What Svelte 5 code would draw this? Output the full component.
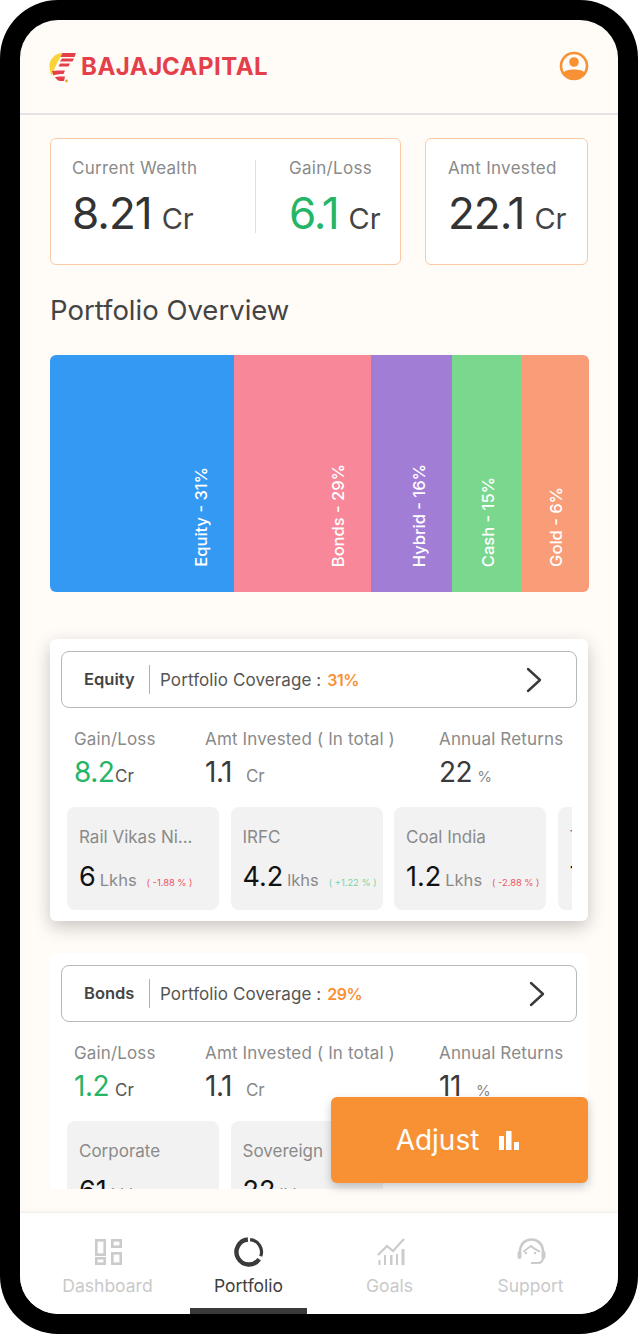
<script lang="ts">
  const summary = [
    { label: 'Current Wealth', value: '8.21', tone: '' },
    { label: 'Gain/Loss', value: '6.1', tone: 'green' }
  ];

  const slices = [
    { label: 'Equity - 31%', width: 184, color: '#3399f3' },
    { label: 'Bonds - 29%', width: 137, color: '#f78799' },
    { label: 'Hybrid - 16%', width: 81, color: '#a17dd6' },
    { label: 'Cash - 15%', width: 69, color: '#79d88e' },
    { label: 'Gold - 6%', width: 68, color: '#f99d79' }
  ];

  const groups = [
    {
      name: 'Equity',
      coverage: '31%',
      gain: '8.2',
      invested: '1.1',
      returns: '22',
      raised: true,
      tiles: [
        { name: 'Rail Vikas Ni...', value: '6', unit: 'Lkhs', change: '( -1.88 % )', up: false },
        { name: 'IRFC', value: '4.2', unit: 'lkhs', change: '( +1.22 % )', up: true },
        { name: 'Coal India', value: '1.2', unit: 'Lkhs', change: '( -2.88 % )', up: false },
        { name: 'Tata Steel', value: '7.1', unit: 'Lkhs', change: '', up: false }
      ]
    },
    {
      name: 'Bonds',
      coverage: '29%',
      gain: '1.2',
      invested: '1.1',
      returns: '11',
      raised: false,
      tiles: [
        { name: 'Corporate', value: '61', unit: 'Lkhs', change: '', up: false },
        { name: 'Sovereign', value: '22', unit: 'lkhs', change: '', up: false }
      ]
    }
  ];
</script>

<div class="frame">
  <div class="screen">
    <header class="topbar">
      <div class="brand">
        <svg width="30" height="32" viewBox="0 0 30 32" aria-hidden="true">
          <path d="M15 2C7 2 1.500 8 1.500 15C1.500 19 2.500 23 4 25C6.500 17 10 9 15 2Z" fill="#f9d23c" />
          <path d="M14.500 2H28L26.500 6H12.500Z" fill="#e5404a" />
          <path d="M14 7.500H26L24.500 10.500H12Z" fill="#e5404a" />
          <path d="M12 12.500H22L20.500 15.500H10.500Z" fill="#e5404a" />
          <path d="M4 20C8 19.500 12 19.500 17 19.500L15.500 23C11 23 8 23.500 5.500 24.500Z" fill="#e5404a" />
          <path d="M7 26C10 25.500 13 25.500 17 25.500L16 30H12.500C10 30 8 28 7 26Z" fill="#e5404a" />
          <circle cx="18.500" cy="30" r="1.400" fill="#f5a623" />
        </svg>
        <span class="wordmark">BAJAJ CAPITAL</span>
      </div>
      <svg class="avatar" width="30" height="30" viewBox="0 0 30 30" aria-hidden="true">
        <defs>
          <clipPath id="avatar-clip"><circle cx="15" cy="15" r="14" /></clipPath>
        </defs>
        <circle cx="15" cy="15" r="13" fill="none" stroke="#f79134" stroke-width="2.600" />
        <circle cx="15" cy="11" r="4.800" fill="#f79134" />
        <path d="M3 29V25C3 20.500 8 18.500 15 18.500C22 18.500 27 20.500 27 25V29Z" fill="#f79134" clip-path="url(#avatar-clip)" />
      </svg>
    </header>

    <main class="content">
      <section class="summary">
        <div class="stat-box wide">
          {#each summary as item, i}
            <div class="stat" class:split={i > 0}>
              <div class="stat-label">{item.label}</div>
              <div class="stat-value">
                <span class="figure {item.tone}">{item.value}</span>
                <span class="unit">Cr</span>
              </div>
            </div>
          {/each}
        </div>
        <div class="stat-box narrow">
          <div class="stat">
            <div class="stat-label">Amt Invested</div>
            <div class="stat-value">
              <span class="figure">22.1</span>
              <span class="unit">Cr</span>
            </div>
          </div>
        </div>
      </section>

      <h1>Portfolio Overview</h1>

      <div class="chart">
        {#each slices as slice}
          <div class="slice" style="width: {slice.width}px; background: {slice.color}">
            <span>{slice.label}</span>
          </div>
        {/each}
      </div>

      {#each groups as group}
        <article class="group" class:raised={group.raised}>
          <div class="group-head">
            <strong>{group.name}</strong>
            <span class="coverage">Portfolio Coverage :</span>
            <span class="coverage-value">{group.coverage}</span>
            <svg class="chevron" width="18" height="26" viewBox="0 0 18 26" aria-hidden="true">
              <path d="M3 2L15 13L3 24" fill="none" stroke="#3a3a3a" stroke-width="2.400" stroke-linecap="round" stroke-linejoin="round" />
            </svg>
          </div>

          <div class="metrics">
            <div>
              <div class="metric-label">Gain/Loss</div>
              <div class="metric-value"><span class="green gain">{group.gain}</span><small>Cr</small></div>
            </div>
            <div>
              <div class="metric-label">Amt Invested ( In total )</div>
              <div class="metric-value">{group.invested}<small class="far">Cr</small></div>
            </div>
            <div>
              <div class="metric-label">Annual Returns</div>
              <div class="metric-value"><span class="returns">{group.returns}</span><small class="pct">%</small></div>
            </div>
          </div>

          <div class="tiles">
            {#each group.tiles as tile}
              <div class="tile">
                <div class="tile-name">{tile.name}</div>
                <div class="tile-value">
                  <b>{tile.value}</b>
                  <span class="tile-unit">{tile.unit}</span>
                  <span class="tile-change" class:up={tile.up}>{tile.change}</span>
                </div>
              </div>
            {/each}
          </div>
        </article>
      {/each}
    </main>

    <button class="adjust">
      Adjust
      <svg width="20" height="19" viewBox="0 0 20 19" aria-hidden="true">
        <rect x="0" y="5" width="5" height="14" fill="#fff" />
        <rect x="7" y="0" width="5.500" height="19" fill="#fff" />
        <rect x="15" y="11" width="5" height="8" fill="#fff" />
      </svg>
    </button>

    <nav class="tabs">
      <div class="tab">
        <svg width="30" height="30" viewBox="0 0 30 30" aria-hidden="true">
          <g fill="none" stroke="#cbcbcb" stroke-width="2.600">
            <rect x="3.300" y="3.300" width="8.400" height="14.400" />
            <rect x="19.300" y="3.300" width="8.400" height="6.400" />
            <rect x="3.300" y="21.300" width="8.400" height="5.400" />
            <rect x="19.300" y="16.300" width="8.400" height="10.400" />
          </g>
        </svg>
        <span>Dashboard</span>
      </div>
      <div class="tab active">
        <svg width="30" height="30" viewBox="0 0 30 30" aria-hidden="true">
          <g fill="none" stroke="#3a3a3a">
            <path d="M16.100 2.550A12.500 12.500 0 0 1 26.750 19.300" stroke-width="3.200" />
            <path d="M25.200 22.200A12.500 12.500 0 1 1 13.900 2.550" stroke-width="4.400" />
          </g>
        </svg>
        <span>Portfolio</span>
      </div>
      <div class="tab">
        <svg width="30" height="30" viewBox="0 0 30 30" aria-hidden="true">
          <g fill="#cbcbcb">
            <rect x="3.500" y="23" width="2" height="5" />
            <rect x="9" y="18" width="2" height="10" />
            <rect x="15" y="18" width="2.500" height="10" />
            <rect x="21" y="17" width="2" height="11" />
            <rect x="26.500" y="12" width="3" height="16" />
          </g>
          <path d="M3 18L12 9L18 14L29 2" fill="none" stroke="#cbcbcb" stroke-width="2.200" />
        </svg>
        <span>Goals</span>
      </div>
      <div class="tab">
        <svg width="30" height="30" viewBox="0 0 30 30" aria-hidden="true">
          <g fill="none" stroke="#cbcbcb">
            <path d="M4 15C4 7 9 2.500 15.500 2.500C22 2.500 27 7 27 15" stroke-width="2.600" />
            <path d="M7.500 15C10 12 12.500 11 15 9C18 12 21 13 24 15" stroke-width="2" />
            <path d="M27 20C27 24 25 26 22 26H15" stroke-width="2.200" />
          </g>
          <rect x="1.500" y="14" width="4" height="8" rx="2" fill="#cbcbcb" />
          <rect x="25.500" y="14" width="4" height="8" rx="2" fill="#cbcbcb" />
          <circle cx="10" cy="16" r="1.200" fill="#cbcbcb" />
          <circle cx="19" cy="16" r="1.200" fill="#cbcbcb" />
        </svg>
        <span>Support</span>
      </div>
    </nav>
  </div>
</div>

<style>
  :global(body) {
    margin: 0;
    background: #fff;
  }

  .frame {
    width: 638px;
    height: 1334px;
    box-sizing: border-box;
    padding: 20px;
    background: #000;
    border-radius: 58px;
    font-family: Inter, "Liberation Sans", sans-serif;
    color: #3a3a3a;
  }

  .screen {
    position: relative;
    width: 598px;
    height: 1294px;
    display: flex;
    flex-direction: column;
    background: #fffbf7;
    border-radius: 38px;
    overflow: hidden;
  }

  .topbar {
    height: 95px;
    flex: none;
    box-sizing: border-box;
    display: flex;
    align-items: center;
    justify-content: space-between;
    padding: 0 29px 0 28px;
    border-bottom: 2px solid #e6e1e6;
  }

  .brand {
    display: flex;
    align-items: center;
    gap: 3px;
  }

  .wordmark {
    font-size: 24px;
    font-weight: 700;
    letter-spacing: 0.5px;
    word-spacing: -7px;
    color: #e5404a;
  }

  .avatar {
    margin-top: -1px;
  }

  .content {
    height: 1074px;
    flex: none;
    overflow: hidden;
    box-sizing: border-box;
    padding: 23px 29px 0 30px;
  }

  .summary {
    display: flex;
    gap: 24px;
  }

  .stat-box {
    height: 127px;
    box-sizing: border-box;
    display: flex;
    padding-top: 19px;
    background: #fff;
    border: 1px solid #fbc9a4;
    border-radius: 6px;
  }

  .wide {
    width: 351px;
    padding-left: 21px;
  }

  .narrow {
    width: 163px;
    padding-left: 22px;
  }

  .stat {
    width: 183px;
  }

  .stat.split {
    width: 145px;
    padding-left: 33px;
    border-left: 1px solid #e0e0e0;
    height: 73px;
    box-sizing: border-box;
    margin-top: 2px;
  }

  .split .stat-label {
    margin-top: -2px;
  }

  .stat-label {
    font-size: 17px;
    line-height: 20px;
    letter-spacing: 0.3px;
    color: #8a8a8a;
  }

  .stat-value {
    margin-top: 10px;
    display: flex;
    align-items: baseline;
    gap: 10px;
  }

  .figure {
    font-size: 44px;
    line-height: 50px;
    font-weight: 400;
    letter-spacing: -1px;
    color: #333;
  }

  .unit {
    font-size: 29px;
    color: #444;
  }

  .green {
    color: #25b566;
  }

  h1 {
    margin: 27px 0 0;
    font-size: 27.500px;
    line-height: 36px;
    font-weight: 400;
    color: #444;
  }

  .chart {
    margin-top: 27px;
    width: 539px;
    height: 237px;
    display: flex;
    border-radius: 6px;
    overflow: hidden;
  }

  .slice {
    box-sizing: border-box;
    display: flex;
    align-items: flex-end;
    justify-content: flex-end;
    padding: 0 23px 25px 0;
  }

  .slice span {
    writing-mode: vertical-rl;
    transform: rotate(180deg);
    font-size: 16.500px;
    line-height: 20px;
    font-weight: 500;
    color: #fff;
  }

  .group {
    width: 538px;
    height: 282px;
    box-sizing: border-box;
    margin-top: 32px;
    padding: 12px 11px;
    background: #fff;
    border-radius: 6px;
  }

  .chart + .group {
    margin-top: 47px;
  }

  .raised {
    box-shadow: 0 6px 18px rgba(0, 0, 0, 0.22);
  }

  .group-head {
    height: 57px;
    box-sizing: border-box;
    display: flex;
    align-items: center;
    padding: 0 33px 0 22px;
    border: 1px solid #b8b8b8;
    border-radius: 8px;
    font-size: 17px;
  }

  .group-head strong {
    width: 65px;
    height: 29px;
    line-height: 29px;
    font-weight: 600;
    font-size: 16.500px;
    color: #444;
    border-right: 1px solid #b0b0b0;
    margin-right: 10px;
  }

  .coverage {
    letter-spacing: 0.1px;
    color: #555;
  }

  .coverage-value {
    margin-left: 6px;
    font-size: 16px;
    font-weight: 600;
    letter-spacing: -0.5px;
    color: #f79134;
  }

  .chevron {
    margin-left: auto;
  }

  .group:not(.raised) .chevron {
    margin-right: -3px;
  }

  .metrics {
    display: grid;
    grid-template-columns: 131px 234px 1fr;
    padding: 21px 0 0 13px;
  }

  .metric-label {
    font-size: 17px;
    line-height: 20px;
    letter-spacing: 0.15px;
    color: #8a8a8a;
    white-space: nowrap;
  }

  .metric-value {
    margin-top: 8px;
    font-size: 28px;
    line-height: 30px;
    letter-spacing: -0.5px;
    color: #3a3a3a;
  }

  .metric-value small {
    font-size: 17px;
    letter-spacing: 0;
    color: #555;
  }

  .gain {
    display: inline-block;
    min-width: 41px;
  }

  .returns {
    display: inline-block;
    min-width: 32px;
  }

  .metric-value small.far {
    margin-left: 14px;
    color: #888;
  }

  .metric-value small.pct {
    margin-left: 5px;
    font-size: 15px;
    color: #888;
  }

  .tiles {
    margin: 15px 5px 0 6px;
    display: flex;
    gap: 11.500px;
    overflow: hidden;
  }

  .tile {
    flex: 0 0 152px;
    height: 103px;
    box-sizing: border-box;
    padding: 20px 0 0 12px;
    background: #f2f2f2;
    border-radius: 8px;
    overflow: hidden;
  }

  .tile-name {
    font-size: 17px;
    line-height: 20px;
    color: #8a8a8a;
    white-space: nowrap;
  }

  .tile-value {
    margin-top: 13px;
    display: flex;
    align-items: baseline;
    white-space: nowrap;
  }

  .tile-value b {
    font-size: 27px;
    font-weight: 400;
    color: #111;
  }

  .tile-unit {
    margin-left: 4px;
    font-size: 16.500px;
    color: #8a8a8a;
  }

  .tile-change {
    margin-left: 10px;
    font-size: 9.300px;
    color: #ea5560;
  }

  .tile-change.up {
    color: #7fd49c;
  }

  .adjust {
    position: absolute;
    left: 311px;
    top: 1077px;
    width: 257px;
    height: 86px;
    display: flex;
    align-items: center;
    justify-content: center;
    gap: 20px;
    padding: 0 4px 0 0;
    border: 0;
    border-radius: 6px;
    background: #f79134;
    box-shadow: 0 4px 10px rgba(0, 0, 0, 0.22);
    font: 400 28px Inter, "Liberation Sans", sans-serif;
    color: #fff;
  }

  .tabs {
    margin-top: auto;
    height: 101px;
    flex: none;
    box-sizing: border-box;
    display: grid;
    grid-template-columns: repeat(4, 141px);
    padding-left: 17px;
    background: #fff;
    box-shadow: 0 -1px 3px rgba(0, 0, 0, 0.08);
    position: relative;
  }

  .tab {
    position: relative;
    display: flex;
    flex-direction: column;
    align-items: center;
    padding-top: 24px;
    font-size: 17.500px;
    line-height: 20px;
    color: #c9c9c9;
  }

  .tab span {
    margin-top: 9px;
  }

  .tab.active {
    color: #3f3f3f;
  }

  .tab.active::after {
    content: "";
    position: absolute;
    left: 12px;
    bottom: 0;
    width: 117px;
    height: 6px;
    background: #3a3a3a;
  }
</style>
